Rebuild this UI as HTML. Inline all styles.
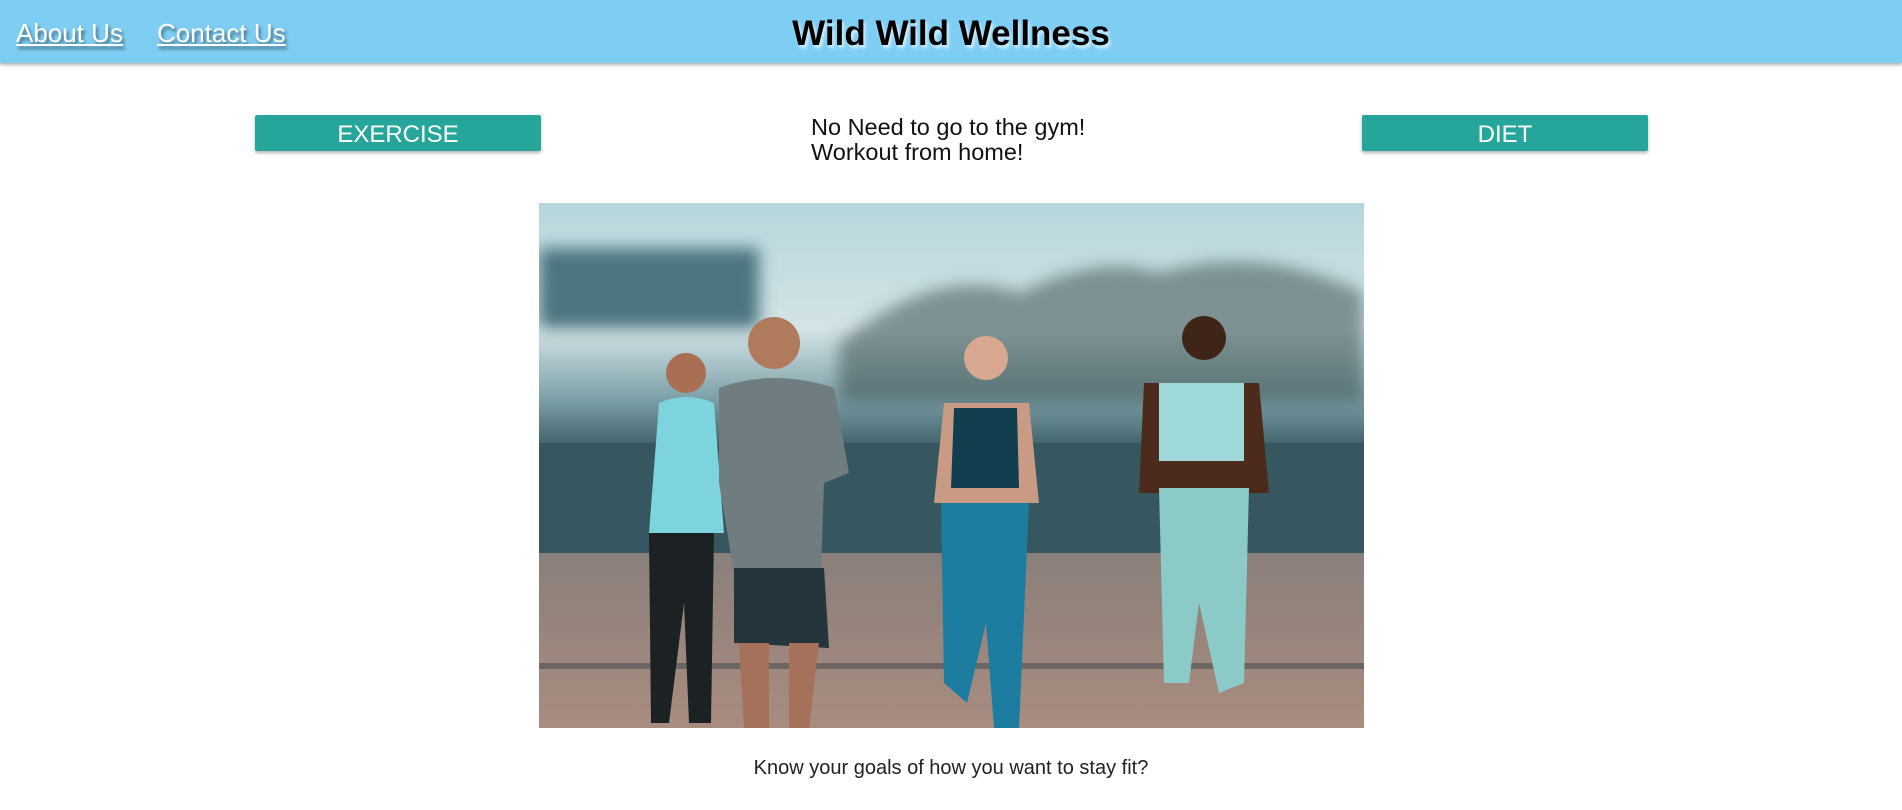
<!DOCTYPE html>
<html><head><meta charset="utf-8"><style>
html,body{margin:0;padding:0;width:1902px;height:810px;overflow:hidden;background:#fff;font-family:"Liberation Sans",sans-serif}
.hdr{position:absolute;left:0;top:0;width:1902px;height:63px;background:#7ecef4;box-shadow:0 2px 3px rgba(0,0,0,.3)}
.lnk{position:absolute;top:18px;color:#fff;font-size:26px;text-decoration:underline;text-shadow:2px 3px 3px rgba(0,0,0,.5)}
.title{position:absolute;left:0;width:1902px;top:14px;text-align:center;font-weight:bold;font-size:35px;color:#000;text-shadow:2px 3px 3px rgba(255,255,255,.7)}
.btn{position:absolute;top:115px;width:286px;height:36px;background:#26a69a;color:#fff;font-size:24px;text-align:center;line-height:39px;box-shadow:0 2px 3px rgba(0,0,0,.3);border-radius:2px}
.mid{position:absolute;left:811px;top:115px;font-size:23.5px;line-height:25px;color:#111}
.img{position:absolute;left:539px;top:203px;width:825px;height:525px;overflow:hidden}
.cap{position:absolute;left:0;width:1902px;top:757px;text-align:center;font-size:20px;color:#222}
</style></head><body>
<div class="hdr">
<span class="lnk" style="left:16px">About Us</span>
<span class="lnk" style="left:157px">Contact Us</span>
<div class="title">Wild Wild Wellness</div>
</div>
<div class="btn" style="left:255px">EXERCISE</div>
<div class="btn" style="left:1362px">DIET</div>
<div class="mid">No Need to go to the gym!<br>Workout from home!</div>
<div class="img">
<svg width="825" height="525" viewBox="0 0 825 525">
<defs>
<linearGradient id="sky" x1="0" y1="0" x2="0" y2="1"><stop offset="0" stop-color="#b6d6dc"/><stop offset="0.35" stop-color="#d3e4e6"/><stop offset="0.55" stop-color="#7a9ea6"/><stop offset="0.68" stop-color="#3e5f68"/></linearGradient>
<linearGradient id="fl" x1="0" y1="0" x2="0" y2="1"><stop offset="0" stop-color="#8a7f7a"/><stop offset="1" stop-color="#a98c80"/></linearGradient>
<filter id="b"><feGaussianBlur stdDeviation="8"/></filter>
</defs>
<rect width="825" height="360" fill="url(#sky)"/>
<g filter="url(#b)">
<rect x="0" y="45" width="220" height="80" fill="#4b7580"/>
<path d="M300 140 Q400 60 480 90 Q560 50 620 70 Q720 40 825 90 L825 200 L300 200Z" fill="#3b4f50" opacity=".55"/>
</g>
<rect x="0" y="240" width="825" height="120" fill="#375760"/>
<rect x="0" y="350" width="825" height="175" fill="url(#fl)"/>
<rect x="0" y="460" width="825" height="6" fill="#6b6664"/>
<circle cx="147" cy="170" r="20" fill="#a86f55"/>
<path d="M120 200 Q147 188 175 200 L185 330 L110 330Z" fill="#7ed4dc"/>
<path d="M110 330 L175 330 L172 520 L150 520 L145 400 L130 520 L112 520Z" fill="#1c2224"/>
<circle cx="235" cy="140" r="26" fill="#b07a5c"/>
<path d="M180 185 Q235 165 295 185 L310 270 L285 280 L282 370 L195 370 L180 280Z" fill="#6f7c80"/>
<path d="M195 365 L285 365 L290 445 L195 440Z" fill="#25353b"/>
<path d="M200 440 L230 440 L230 525 L205 525Z M250 440 L280 440 L270 525 L250 525Z" fill="#a5715a"/>
<circle cx="447" cy="155" r="22" fill="#d9a890"/>
<path d="M405 200 L490 200 L500 300 L395 300Z" fill="#c99a84"/>
<path d="M415 205 L478 205 L480 285 L412 285Z" fill="#123f4f"/>
<path d="M402 300 L490 300 L480 525 L455 525 L447 420 L428 500 L405 480Z" fill="#1d7da0"/>
<circle cx="665" cy="135" r="22" fill="#3f2418"/>
<path d="M605 180 L720 180 L730 290 L600 290Z" fill="#4d2b1c"/>
<path d="M620 180 L705 180 L705 258 L620 258Z" fill="#9fd8d8"/>
<path d="M620 285 L710 285 L705 480 L680 490 L660 400 L650 480 L625 480Z" fill="#8ccac7"/>
</svg>
</div>
<div class="cap">Know your goals of how you want to stay fit?</div>
</body></html>
